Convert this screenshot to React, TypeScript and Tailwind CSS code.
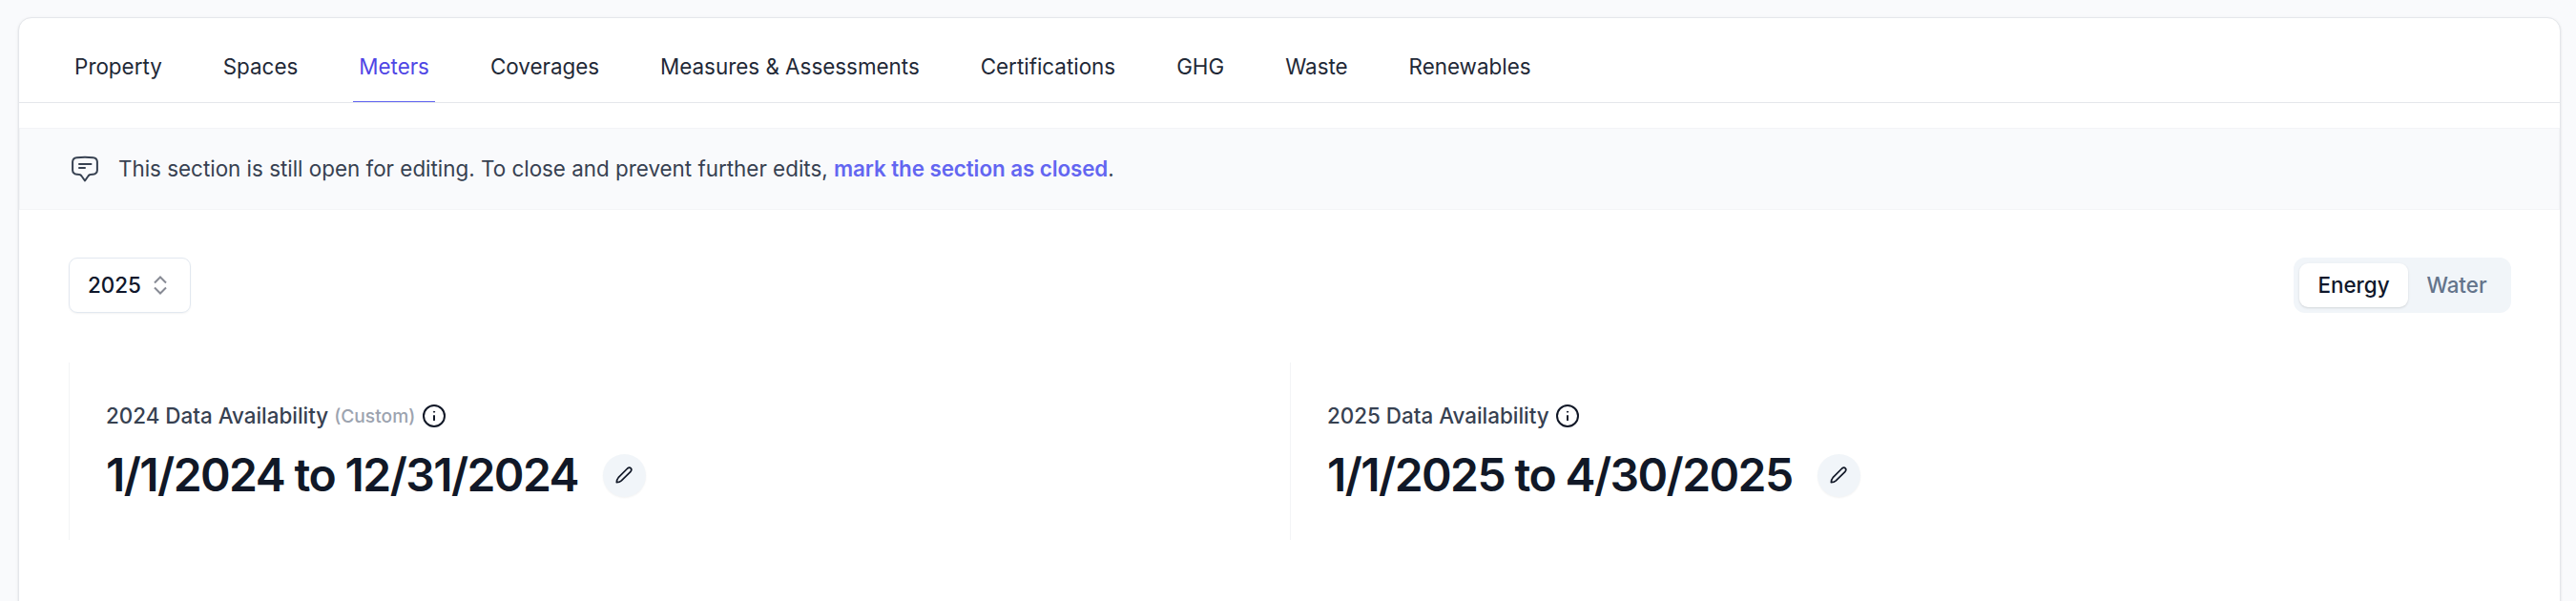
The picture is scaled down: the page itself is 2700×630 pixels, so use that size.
import React from "react";

const tabs = ["Property", "Spaces", "Meters", "Coverages", "Measures & Assessments", "Certifications", "GHG", "Waste", "Renewables"];

function InfoIcon() {
  return (
    <svg className="ml-[6.5px] size-[26px]" viewBox="0 0 26 26" fill="none" stroke="#111827" strokeWidth="2" strokeLinecap="round">
      <circle cx="13" cy="13" r="11" />
      <path d="M13 13v4.200" />
      <circle cx="13" cy="8.7" r="0.6" fill="#111827" strokeWidth="1" />
    </svg>
  );
}

function EditButton() {
  return (
    <button className="ml-[26px] flex size-[45px] items-center justify-center rounded-full bg-[#f1f5f9] shadow-xs">
      <svg className="size-[20px]" viewBox="0 0 20 20" fill="none" stroke="#111827" strokeWidth="1.7" strokeLinecap="round" strokeLinejoin="round">
        <path d="M13.700 3Q15.800 1.400 17.200 2.800Q18.600 4.200 17 6.300L7.300 15.900Q5.400 17.600 2.300 17.700Q2.400 14.600 4.100 12.700z" />
      </svg>
    </button>
  );
}

function Stat({ title, note, value }: { title: string; note?: string; value: string }) {
  return (
    <div className="h-[186px] w-[1280px] border-l border-gray-100 pt-[38px] pl-[38px]">
      <div className="flex h-[36px] items-center text-[22.4px] font-medium text-[#374151]">
        <span>{title}</span>
        {note && <span className="ml-[6px] text-[19.2px] text-[#9ca3af]">{note}</span>}
        <InfoIcon />
      </div>
      <div className="mt-[20px] flex h-[48px] items-center">
        <span className="text-[48px] font-semibold tracking-[-1.58px] text-[#111827]">{value}</span>
        <EditButton />
      </div>
    </div>
  );
}

export default function App() {
  return (
    <div className="h-[630px] w-[2700px] overflow-hidden bg-[#f9fafc] px-[19px] pt-[18px] font-['Inter',sans-serif]">
      <main className="h-[640px] w-[2665px] rounded-t-[14px] border border-gray-200 bg-white shadow-sm">
        <nav className="flex h-[89px] gap-[51.2px] border-b border-gray-200 pl-[51.7px]">
          {tabs.map((tab) => (
            <a key={tab} className={tab === "Meters" ? "flex h-[88px] items-center border-b border-[#6366f1] px-[6.4px] pt-[14px] text-[22.4px] text-[#4f46e5]" : "flex h-[88px] items-center px-[6.4px] pt-[13px] text-[22.4px] text-[#1f2937]"}>
              {tab}
            </a>
          ))}
        </nav>
        <section className="mt-[26px] flex h-[86px] items-center border border-gray-100 bg-[#f9fafc] pl-[51px] text-[22.4px] text-[#374151]">
          <svg className="mr-[20px] size-[32px]" viewBox="0 0 32 32" fill="none" stroke="currentColor" strokeWidth="2" strokeLinecap="round" strokeLinejoin="round">
            <path d="M8.500 4.200Q17 3.400 25.500 4.200Q29.700 4.700 29.900 8.500V17.500Q29.700 21.300 25.500 21.700Q21.500 21.600 20.500 23.500L17 28.500L13.500 23.500Q12.500 21.600 8.500 21.700Q4.300 21.300 4.100 17.500V8.500Q4.300 4.700 8.500 4.200z" />
            <path d="M11 11h12.500M11 15h6" />
          </svg>
          <p>This section is still open for editing. To close and prevent further edits, <a className="font-semibold tracking-[-0.08px] text-[#6366f1]">mark the section as closed</a>.</p>
        </section>
        <div className="mt-[50px] flex justify-between pr-[51px] pl-[52px]">
          <button className="flex h-[58px] w-[128px] items-center rounded-[9px] border border-slate-200 pl-[19px] text-[22.4px] font-[450] text-slate-900 shadow-xs">
            2025
            <svg className="ml-[13px] h-[20px] w-[14px]" viewBox="0 0 14 20" fill="none" stroke="#878a94" strokeWidth="2">
              <path d="M1 7.500l6-6 6 6M1 12.500l6 6 6-6" />
            </svg>
          </button>
          <div className="flex h-[58px] w-[228px] rounded-[12px] bg-[#f1f5f9] p-[6px] text-[22.4px] font-medium">
            <button className="flex h-[46px] w-[114px] items-center justify-center rounded-[9px] bg-white text-slate-900 shadow-sm">Energy</button>
            <button className="flex h-[46px] w-[102px] items-center justify-center text-[#64748b]">Water</button>
          </div>
        </div>
        <div className="mt-[52px] flex pl-[52px]">
          <Stat title="2024 Data Availability" note="(Custom)" value="1/1/2024 to 12/31/2024" />
          <Stat title="2025 Data Availability" value="1/1/2025 to 4/30/2025" />
        </div>
      </main>
    </div>
  );
}
